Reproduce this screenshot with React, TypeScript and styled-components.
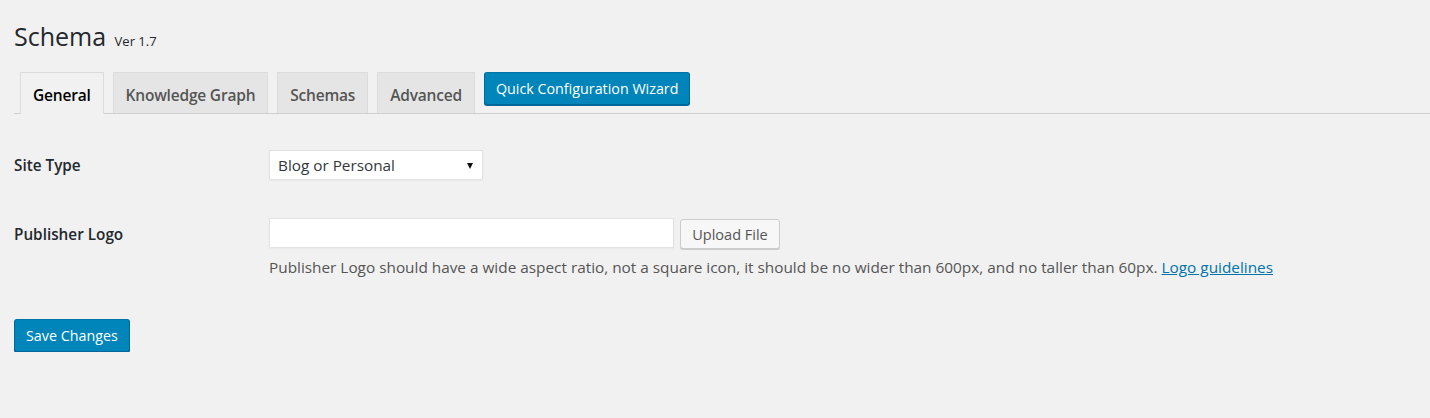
// Library Imports
import * as React from 'react';
import styled, { createGlobalStyle } from 'styled-components';

// Styling
const GlobalStyle = createGlobalStyle`
	body {
		margin: 0;
		background: #f1f1f1;
		font-family: "Open Sans", "Noto Sans", sans-serif;
		color: #23282d;
	}
`

const Wrap = styled.div`
	padding: 18px 0 0 14px;
`

const Title = styled.h1`
	margin: 0;
	font-size: 25px;
	font-weight: 400;
	line-height: 36px;
	color: #23282d;
`

const Version = styled.span`
	font-size: 13px;
	margin-left: 2px;
`

const TabBar = styled.nav`
	display: flex;
	align-items: flex-start;
	margin-top: 13px;
	padding-left: 6px;
	border-bottom: 1px solid #cfcfcf;
	height: 41px;
`

const Tab = styled.a<{ $active?: boolean }>`
	box-sizing: border-box;
	display: flex;
	align-items: center;
	height: ${p => p.$active ? '42px' : '41px'};
	padding: 3px 12px 0;
	margin-right: 9px;
	border: 1px solid #dcdcdc;
	border-bottom: none;
	background: ${p => p.$active ? '#f1f1f1' : '#e5e5e5'};
	color: ${p => p.$active ? '#000' : '#555'};
	font-size: 15.5px;
	font-weight: 600;
	letter-spacing: -0.2px;
	position: relative;
	z-index: 1;
`

const WizardButton = styled.button`
	box-sizing: border-box;
	height: 33px;
	padding: 0 11px;
	border: 1px solid #0073aa;
	border-color: #0073aa #006799 #006799;
	border-radius: 3px;
	background: #0085ba;
	box-shadow: 0 1px 0 #006799;
	color: #fff;
	font-family: inherit;
	font-size: 14.3px;
`

const Form = styled.div`
	display: grid;
	grid-template-columns: 255px 1fr;
	align-items: start;
	padding-top: 36px;
	row-gap: 37px;
`

const Label = styled.div<{ $offset?: number }>`
	font-size: 15.3px;
	font-weight: 600;
	line-height: 30px;
	margin-top: ${p => p.$offset || 0}px;
`

const Field = styled.div`
	display: flex;
	flex-direction: column;
`

const InputRow = styled.div`
	display: flex;
	align-items: center;
	gap: 6px;
`

const SelectBox = styled.div`
	box-sizing: border-box;
	position: relative;
	width: 214px;
	height: 30px;
	padding: 0 8px;
	background: #fff;
	border: 1px solid #e2e2e2;
	box-shadow: 0 1px 2px rgba(0, 0, 0, 0.04);
	font-size: 15.3px;
	line-height: 28px;
	color: #32373c;
`

const Arrow = styled.span`
	position: absolute;
	right: 9px;
	top: 12px;
	width: 0;
	height: 0;
	border-left: 3.5px solid transparent;
	border-right: 3.5px solid transparent;
	border-top: 6px solid #111;
`

const TextInput = styled.div`
	box-sizing: border-box;
	width: 405px;
	height: 30px;
	background: #fff;
	border: 1px solid #e2e2e2;
	box-shadow: 0 1px 2px rgba(0, 0, 0, 0.04);
`

const SecondaryButton = styled.button`
	box-sizing: border-box;
	height: 30px;
	width: 100px;
	margin-top: 2px;
	border: 1px solid #cccccc;
	border-radius: 3px;
	background: #f7f7f7;
	box-shadow: 0 1px 0 #ccc;
	color: #555;
	font-family: inherit;
	font-size: 14.5px;
`

const Description = styled.p`
	margin: 8px 0 0;
	font-size: 15.35px;
	line-height: 20px;
	color: #555;
`

const Link = styled.a`
	color: #0073aa;
	text-decoration: underline;
`

const PrimaryButton = styled(WizardButton)`
	margin-top: 42px;
	padding: 0 11px;
`

// Render
const App = () => {
	const tabs = ['General', 'Knowledge Graph', 'Schemas', 'Advanced']

	return (
		<>
			<GlobalStyle />
			<Wrap>
				<Title>Schema <Version>Ver 1.7</Version></Title>
				<TabBar>
					{tabs.map((tab, index) => (
						<Tab key={tab} $active={index === 0}>{tab}</Tab>
					))}
					<WizardButton>Quick Configuration Wizard</WizardButton>
				</TabBar>
				<Form>
					<Label>Site Type</Label>
					<Field>
						<SelectBox>
							Blog or Personal
							<Arrow />
						</SelectBox>
					</Field>
					<Label $offset={2}>Publisher Logo</Label>
					<Field>
						<InputRow>
							<TextInput />
							<SecondaryButton>Upload File</SecondaryButton>
						</InputRow>
						<Description>
							Publisher Logo should have a wide aspect ratio, not a square icon, it should be no wider than 600px, and no taller than 60px. <Link>Logo guidelines</Link>
						</Description>
					</Field>
				</Form>
				<PrimaryButton>Save Changes</PrimaryButton>
			</Wrap>
		</>
	)
}

export default App;
